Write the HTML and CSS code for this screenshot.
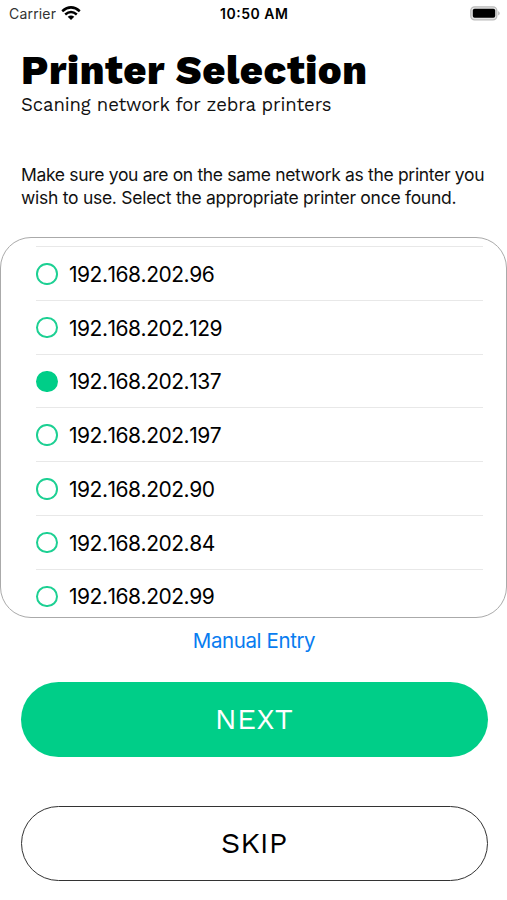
FILE: index.html
```html
<!DOCTYPE html>
<html lang="en">
<head>
<meta charset="utf-8">
<title>Printer Selection</title>
<link rel="stylesheet" href="styles.css">
</head>
<body>
<header class="status">
  <div class="carrier"><svg width="47" height="20"><text x="0" y="15" textLength="47">Carrier</text></svg>
    <svg class="wifi" width="20" height="15" viewBox="0 0 20 15"><g fill="none" stroke="#000" stroke-width="2.5"><path d="M1.2 5.2Q10-2.4 18.8 5.2M4.2 8.5Q10 3.6 15.8 8.5"/></g><path d="M6.7 10.8Q10 8 13.3 10.8L10 14Z"/></svg>
  </div>
  <svg class="time" width="70" height="20"><text x="0" y="15" textLength="68">10:50 AM</text></svg>
  <svg class="battery" width="31" height="15" viewBox="0 0 31 15"><rect x=".8" y=".8" width="26" height="13" rx="3.8" fill="#e4e4e4" stroke="#bbb" stroke-width="1.3"/><rect x="2.8" y="2.8" width="22.4" height="9" rx="1.8"/><path d="M28.3 5Q31 7.3 28.3 9.6Z" fill="#aaa"/></svg>
</header>
<main>
  <h1><svg width="360" height="50"><text x="0" y="38.5" textLength="346">Printer Selection</text></svg></h1>
  <p class="subtitle"><svg width="330" height="24"><text x="0" y="17" textLength="310.5">Scaning network for zebra printers</text></svg></p>
  <p class="help"><svg width="470" height="46"><text x="0" y="17" textLength="463.5">Make sure you are on the same network as the printer you</text><text x="0" y="40" textLength="435.5">wish to use. Select the appropriate printer once found.</text></svg></p>
</main>
<section class="printers">
  <ul>
    <li><i></i><span>192.168.202.96</span></li>
    <li><i></i><span>192.168.202.129</span></li>
    <li><i class="on"></i><span>192.168.202.137</span></li>
    <li><i></i><span>192.168.202.197</span></li>
    <li><i></i><span>192.168.202.90</span></li>
    <li><i></i><span>192.168.202.84</span></li>
    <li><i></i><span>192.168.202.99</span></li>
  </ul>
</section>
<a class="manual">Manual Entry</a>
<button class="next">NEXT</button>
<button class="skip">SKIP</button>
</body>
</html>
```
FILE: styles.css
```css
*{box-sizing:border-box}
body{margin:0;width:507px;height:900px;overflow:hidden;background:#fff;color:#000;font-family:Inter,sans-serif;display:flex;flex-direction:column}
svg{display:block}
.status{height:28px;flex:none;display:grid;grid-template-columns:1fr 70px 1fr;align-items:center;padding:0 6px 0 9px;font-size:14px}
.carrier{display:flex;align-items:center;gap:5px}
.carrier text{fill:#333}
.wifi{margin-top:-2px}
.time{font-weight:600}
.battery{justify-self:end;margin-top:-1px}
main{padding:0 20.5px;height:209px;flex:none}
h1{margin:17px 0 0;font:800 40px "Work Sans",Inter,sans-serif}
.subtitle{margin:-1px 0 0;font:18.5px "Work Sans",Inter,sans-serif}
.subtitle text{fill:#111}
.help{margin:46px 0 0;font-size:17.5px}
.help text{fill:#111}
.printers{height:381px;flex:none;border:1px solid #aaa;border-width:1px 1px 1.5px;border-radius:31px;overflow:hidden;padding:8px 23px 0 35px}
ul{list-style:none;margin:0;padding:0}
li{height:53.75px;border-top:1px solid #e8e8e8;display:flex;align-items:center;gap:11.5px;padding-top:2px;font-size:21px;letter-spacing:-.48px;font-kerning:none}
i{width:21.5px;height:21.5px;flex:none;border:2px solid #1dd093;border-radius:50%;margin-top:-1px}
.on{background:#00ce88;border-color:#00ce88}
.manual{margin-top:9px;padding-left:1px;text-align:center;color:#087cf0;font-size:20.5px;letter-spacing:-.4px;line-height:27px}
button{margin:0 19.5px 0 20.5px;height:75px;flex:none;border-radius:38px;padding:0 0 2px;font:30px "Work Sans",Inter,sans-serif}
.next{margin-top:28px;border:0;background:#00ce88;color:#fff;letter-spacing:.3px}
.skip{margin-top:49px;border:1.3px solid #333;background:#fff;color:#000}
```
